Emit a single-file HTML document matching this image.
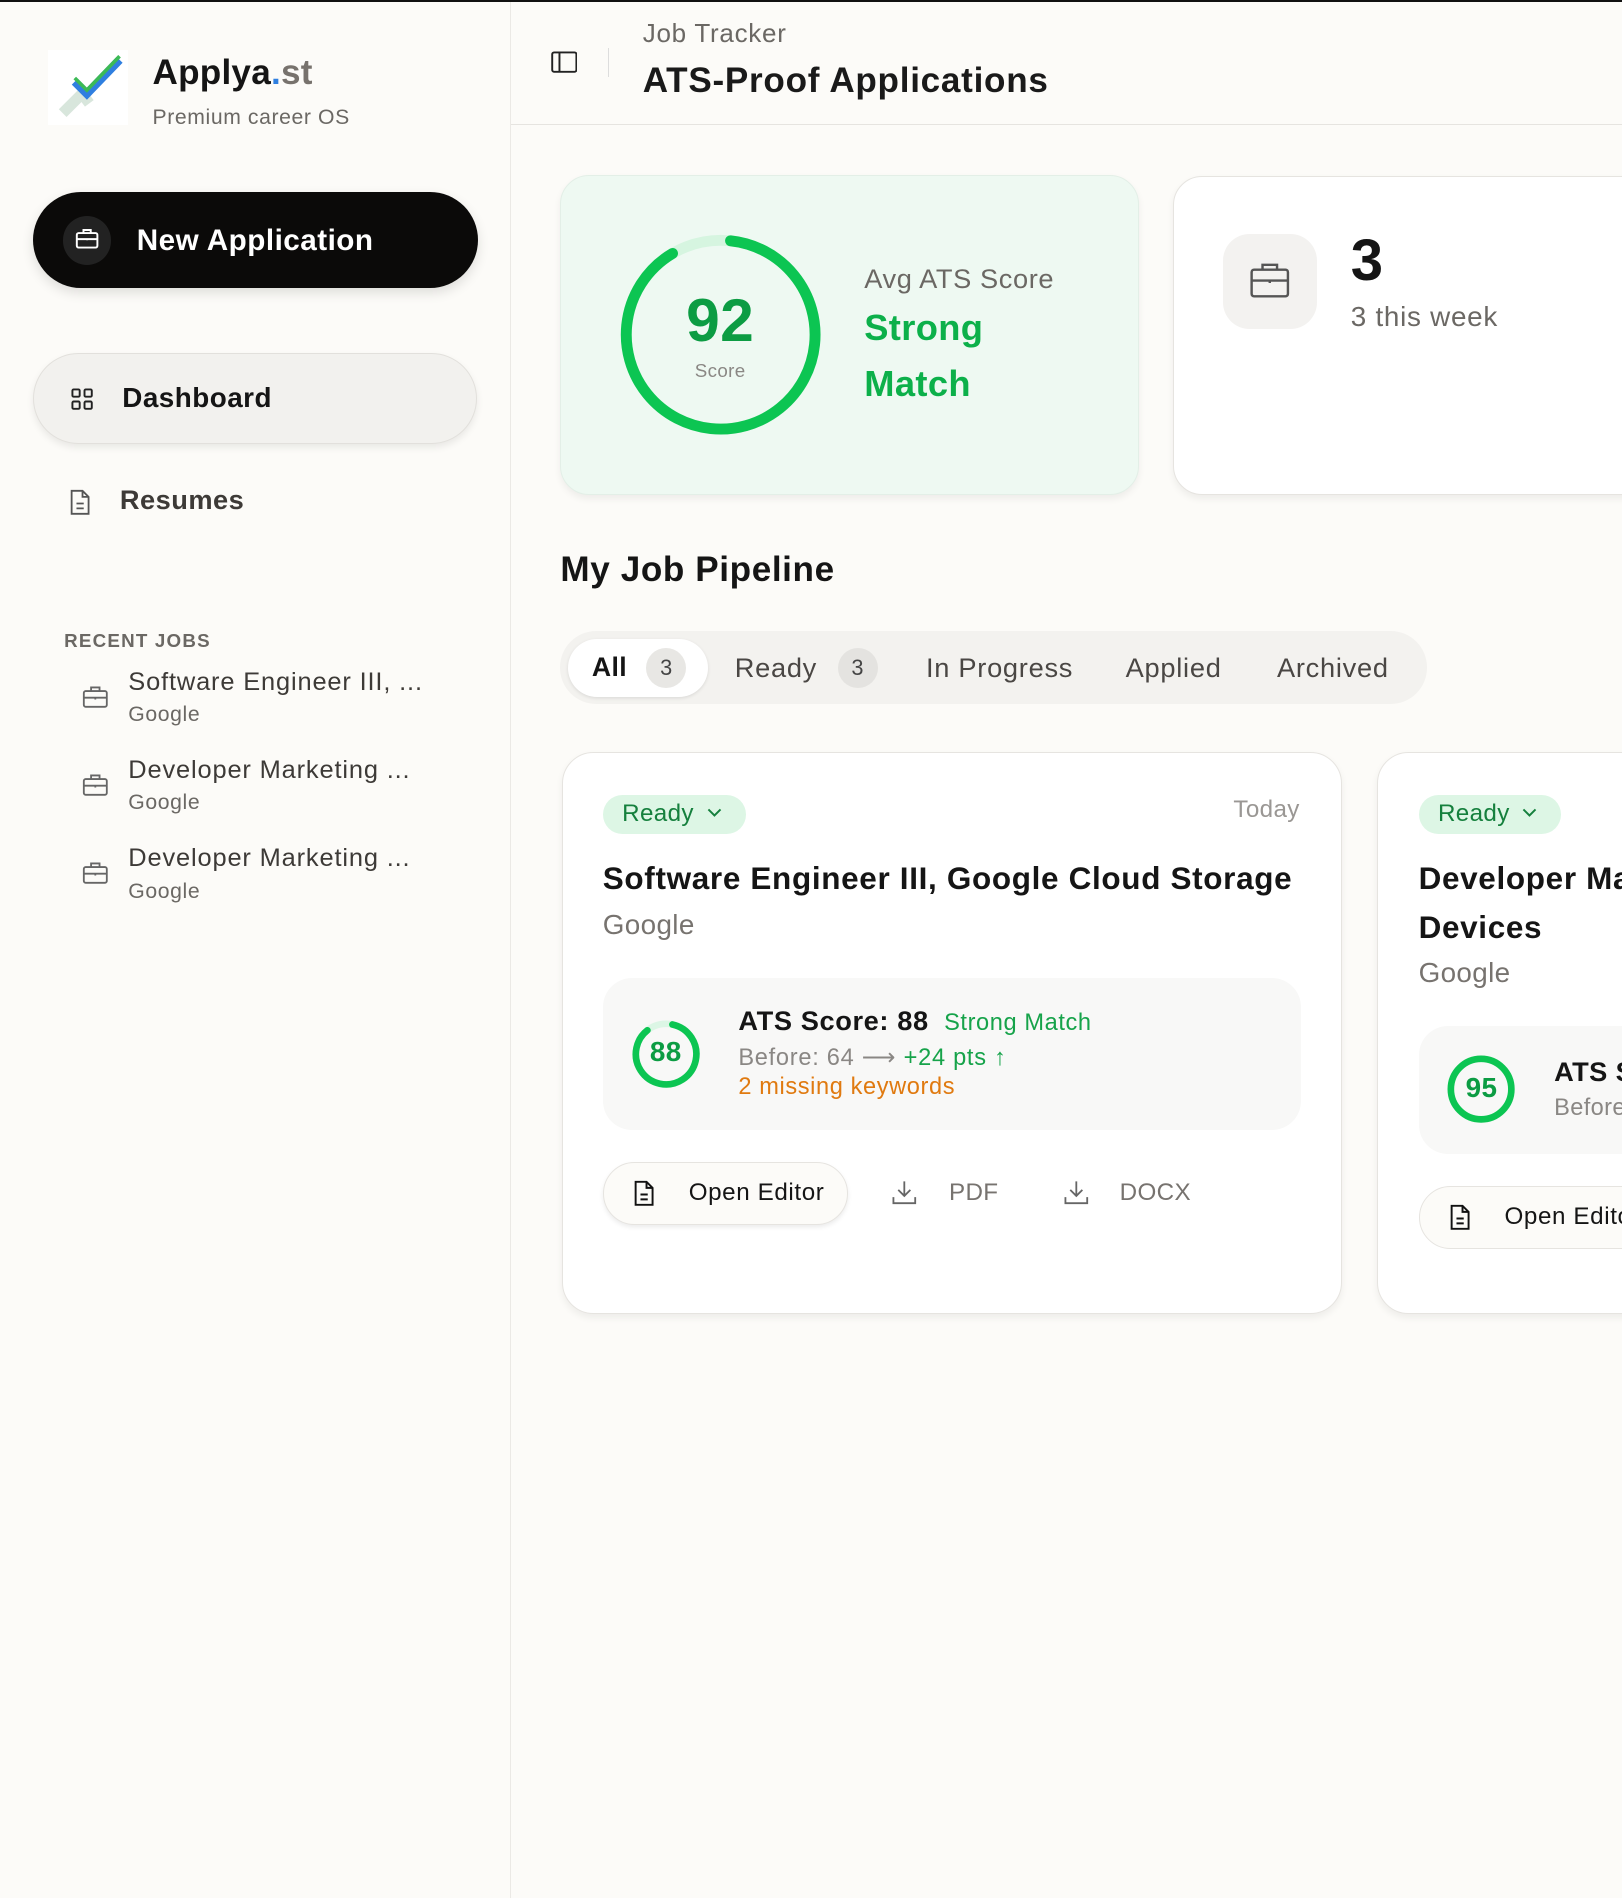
<!DOCTYPE html>
<html><head><style>
*{box-sizing:border-box;margin:0;padding:0}
html,body{width:1622px;height:1898px;overflow:hidden;background:#fcfbf8}
#w{zoom:1.2104;width:1340px;height:1568px;position:relative;font-family:"Liberation Sans",sans-serif;color:#151515;background:#fcfbf8;border-top:2px solid #111;overflow:hidden;letter-spacing:0.3px}
.a{position:absolute;white-space:nowrap}
.g{color:#16a34a}
.gr{color:#6b6864}
svg{display:block}
</style></head><body><div id="w">
<div class="a" style="left:421px;top:0;width:1px;height:1568px;background:#ebe9e5"></div>
<div class="a" style="left:422px;top:101px;width:918px;height:1px;background:#e6e4e0"></div>
<div class="a" style="left:40px;top:40px;width:66px;height:62px;background:#fff"></div>
<svg class="a" style="left:44px;top:44px" width="60" height="56" viewBox="0 0 60 56"><path d="M8 48 L24 32 L30 40" stroke="#d8e6dc" stroke-width="9" fill="none"/><path d="M18 22 L28 32 L55 4" stroke="#2f7fe0" stroke-width="7" fill="none"/><path d="M18 19 L28 29 L55 1" stroke="#3cba55" stroke-width="3" fill="none"/></svg>
<div class="a" style="left:126px;top:42px;font-size:29px;font-weight:bold;letter-spacing:0.2px">Applya<span style="color:#2f7fe0">.</span><span style="color:#77726d">st</span></div>
<div class="a gr" style="left:126px;top:86px;font-size:17.5px;letter-spacing:0.5px">Premium career OS</div>
<div class="a" style="left:27px;top:157px;width:368px;height:79px;background:#0b0a09;border-radius:40px;box-shadow:0 4px 10px rgba(0,0,0,.12)"></div>
<div class="a" style="left:52px;top:177px;width:40px;height:40px;border-radius:50%;background:#222"></div>
<svg class="a" style="left:62px;top:186px" width="20" height="20" viewBox="0 0 20 20" fill="none" stroke="#fff" stroke-width="1.6"><rect x="1.5" y="5" width="17" height="12" rx="1.5"/><path d="M7 5V2.5h6V5M1.5 10h17M10 9.5v1.5"/></svg>
<div class="a" style="left:113px;top:183px;font-size:24.5px;font-weight:bold;color:#fff;letter-spacing:0.4px">New Application</div>
<div class="a" style="left:27px;top:290px;width:367px;height:75px;background:#f2f1ee;border:1px solid #e2e0dc;border-radius:38px;box-shadow:0 3px 6px rgba(0,0,0,.08)"></div>
<svg class="a" style="left:58px;top:318px" width="20" height="20" viewBox="0 0 20 20" fill="none" stroke="#222" stroke-width="1.6"><rect x="2" y="2" width="6" height="6" rx="1"/><rect x="12" y="2" width="6" height="6" rx="1"/><rect x="2" y="12" width="6" height="6" rx="1"/><rect x="12" y="12" width="6" height="6" rx="1"/></svg>
<div class="a" style="left:101px;top:314px;font-size:23px;font-weight:bold;letter-spacing:0.4px">Dashboard</div>
<svg class="a" style="left:56px;top:402px" width="20" height="22" viewBox="0 0 20 22" fill="none" stroke="#555" stroke-width="1.5"><path d="M3 1.5h9l5 5v14H3z M12 1.5v5h5 M7 12h6 M7 16h6"/></svg>
<div class="a" style="left:99px;top:398px;font-size:22.5px;font-weight:bold;color:#3d3a37;letter-spacing:0.4px">Resumes</div>
<div class="a" style="left:53px;top:519px;font-size:15.5px;font-weight:bold;color:#6b6864;letter-spacing:1px">RECENT JOBS</div>
<div class="a" style="left:0;top:548px">
 <svg class="a" style="left:68px;top:16px" width="22" height="20" viewBox="0 0 22 20" fill="none" stroke="#666" stroke-width="1.5"><rect x="1.5" y="5" width="19" height="13" rx="1.5"/><path d="M7.5 5V2h7v3M1.5 10.5h19M11 10v2"/></svg>
 <div class="a" style="left:106px;top:2px;font-size:21px;color:#3d3a37;letter-spacing:0.7px">Software Engineer III, ...</div>
 <div class="a gr" style="left:106px;top:31px;font-size:17.5px;letter-spacing:0.5px">Google</div>
</div>
<div class="a" style="left:0;top:621px">
 <svg class="a" style="left:68px;top:16px" width="22" height="20" viewBox="0 0 22 20" fill="none" stroke="#666" stroke-width="1.5"><rect x="1.5" y="5" width="19" height="13" rx="1.5"/><path d="M7.5 5V2h7v3M1.5 10.5h19M11 10v2"/></svg>
 <div class="a" style="left:106px;top:2px;font-size:21px;color:#3d3a37;letter-spacing:0.7px">Developer Marketing ...</div>
 <div class="a gr" style="left:106px;top:31px;font-size:17.5px;letter-spacing:0.5px">Google</div>
</div>
<div class="a" style="left:0;top:694px">
 <svg class="a" style="left:68px;top:16px" width="22" height="20" viewBox="0 0 22 20" fill="none" stroke="#666" stroke-width="1.5"><rect x="1.5" y="5" width="19" height="13" rx="1.5"/><path d="M7.5 5V2h7v3M1.5 10.5h19M11 10v2"/></svg>
 <div class="a" style="left:106px;top:2px;font-size:21px;color:#3d3a37;letter-spacing:0.7px">Developer Marketing ...</div>
 <div class="a gr" style="left:106px;top:31px;font-size:17.5px;letter-spacing:0.5px">Google</div>
</div>
<svg class="a" style="left:455px;top:40px" width="22" height="20" viewBox="0 0 22 20" fill="none" stroke="#222" stroke-width="1.6"><rect x="1" y="2" width="20" height="16" rx="1.5"/><path d="M7 2v16"/></svg>
<div class="a" style="left:502px;top:38px;width:1px;height:24px;background:#ddd"></div>
<div class="a gr" style="left:531px;top:13px;font-size:21.5px;letter-spacing:0.6px">Job Tracker</div>
<div class="a" style="left:531px;top:49px;font-size:29px;font-weight:bold;color:#1a1a1a;letter-spacing:0.6px">ATS-Proof Applications</div>
<div class="a" style="left:463px;top:143px;width:478px;height:264px;background:#eef9f2;border:1px solid #e3efe7;border-radius:24px;box-shadow:0 3px 6px rgba(0,0,0,.06)"></div>
<svg class="a" style="left:511px;top:191px" width="168" height="168" viewBox="0 0 168 168"><circle cx="84" cy="84" r="78" fill="none" stroke="#d6f5e0" stroke-width="9"/><circle cx="84" cy="84" r="78" fill="none" stroke="#0cc552" stroke-width="9" stroke-linecap="round" stroke-dasharray="440 490" transform="rotate(-84 84 84)"/></svg>
<div class="a" style="left:535px;top:234px;width:120px;text-align:center;font-size:50px;font-weight:bold;color:#0c9c43">92</div>
<div class="a" style="left:535px;top:296px;width:120px;text-align:center;font-size:15.5px;color:#8a8784">Score</div>
<div class="a gr" style="left:714px;top:216px;font-size:22.5px;letter-spacing:0.5px">Avg ATS Score</div>
<div class="a" style="left:714px;top:252px;font-size:30px;font-weight:bold;color:#0cb04a">Strong</div>
<div class="a" style="left:714px;top:298px;font-size:30px;font-weight:bold;color:#0cb04a">Match</div>
<div class="a" style="left:969px;top:144px;width:420px;height:263px;background:#fff;border:1px solid #e6e4e0;border-radius:24px;box-shadow:0 3px 6px rgba(0,0,0,.06)"></div>
<div class="a" style="left:1010px;top:192px;width:78px;height:78px;background:#f3f2f0;border-radius:22px"></div>
<svg class="a" style="left:1031px;top:213px" width="36" height="36" viewBox="0 0 36 36" fill="none" stroke="#555" stroke-width="2"><rect x="3" y="8" width="30" height="22" rx="2"/><path d="M12 8V4h12v4M3 17h30M18 16v3"/></svg>
<div class="a" style="left:1116px;top:186px;font-size:48px;font-weight:bold">3</div>
<div class="a gr" style="left:1116px;top:247px;font-size:23px;letter-spacing:0.6px">3 this week</div>
<div class="a" style="left:463px;top:453px;font-size:29px;font-weight:bold;letter-spacing:0.5px">My Job Pipeline</div>
<div class="a" style="left:463px;top:520px;width:716px;height:60px;background:#f3f2ef;border-radius:30px"></div>
<div class="a" style="left:469px;top:526px;width:116px;height:48px;background:#fff;border-radius:24px;box-shadow:0 1px 3px rgba(0,0,0,.1)"></div>
<div class="a" style="left:489px;top:537px;font-size:22px;font-weight:bold">All</div>
<div class="a" style="left:534px;top:534px;width:33px;height:33px;border-radius:50%;background:#e8e7e4;text-align:center;line-height:33px;font-size:18px;color:#444">3</div>
<div class="a" style="left:607px;top:537px;font-size:22.5px;color:#4a4744;letter-spacing:0.6px">Ready</div>
<div class="a" style="left:692px;top:534px;width:33px;height:33px;border-radius:50%;background:#e4e3e0;text-align:center;line-height:33px;font-size:18px;color:#444">3</div>
<div class="a" style="left:765px;top:537px;font-size:22.5px;color:#4a4744;letter-spacing:0.6px">In Progress</div>
<div class="a" style="left:930px;top:537px;font-size:22.5px;color:#4a4744;letter-spacing:0.6px">Applied</div>
<div class="a" style="left:1055px;top:537px;font-size:22.5px;color:#4a4744;letter-spacing:0.6px">Archived</div>
<div class="a" style="left:464px;top:620px;width:645px;height:464px;background:#fff;border:1.5px solid #e6e4e0;border-radius:26px;box-shadow:0 3px 6px rgba(0,0,0,.06)"></div>
<div class="a" style="left:498px;top:655px;width:118px;height:32px;background:#ddf6e5;border-radius:16px"></div>
<div class="a" style="left:514px;top:659px;font-size:20px;color:#15803d">Ready</div>
<svg class="a" style="left:583px;top:665px" width="14" height="10" viewBox="0 0 14 10" fill="none" stroke="#15803d" stroke-width="1.6"><path d="M2 2l5 5 5-5"/></svg>
<div class="a" style="left:1019px;top:656px;font-size:20px;color:#9a9794">Today</div>
<div class="a" style="left:498px;top:710px;font-size:26px;font-weight:bold;letter-spacing:0.55px">Software Engineer III, Google Cloud Storage</div>
<div class="a gr" style="left:498px;top:749px;font-size:23px;color:#77736f">Google</div>
<div class="a" style="left:498px;top:806px;width:577px;height:126px;background:#f8f8f7;border-radius:24px"></div>
<svg class="a" style="left:521px;top:840px" width="58" height="58" viewBox="0 0 58 58"><circle cx="29" cy="29" r="25" fill="none" stroke="#dcf6e5" stroke-width="5.5"/><circle cx="29" cy="29" r="25" fill="none" stroke="#0cc552" stroke-width="5.5" stroke-linecap="round" stroke-dasharray="135 157" transform="rotate(-78 29 29)"/></svg>
<div class="a" style="left:521px;top:854px;width:58px;text-align:center;font-size:23px;font-weight:bold;color:#0c9c43">88</div>
<div class="a" style="left:610px;top:829px;font-size:22.5px;font-weight:bold;letter-spacing:0.5px">ATS Score: 88 <span style="font-size:19.5px;font-weight:normal;color:#16a34a">&nbsp;Strong Match</span></div>
<div class="a" style="left:610px;top:860px;font-size:19.5px;color:#8a8784;letter-spacing:0.6px">Before: 64 ⟶ <span class="g">+24 pts ↑</span></div>
<div class="a" style="left:610px;top:886px;font-size:19.5px;color:#e07a10;letter-spacing:0.5px">2 missing keywords</div>
<div class="a" style="left:498px;top:958px;width:203px;height:52px;background:#fcfbf8;border:1.5px solid #e6e4e0;border-radius:26px;box-shadow:0 2px 4px rgba(0,0,0,.08)"></div>
<svg class="a" style="left:522px;top:973px" width="20" height="22" viewBox="0 0 20 22" fill="none" stroke="#111" stroke-width="1.6"><path d="M3 1.5h9l5 5v14H3z M12 1.5v5h5 M7 12h6 M7 16h6"/></svg>
<div class="a" style="left:569px;top:972px;font-size:20px;letter-spacing:0.5px">Open Editor</div>
<svg class="a" style="left:736px;top:972px" width="22" height="22" viewBox="0 0 22 22" fill="none" stroke="#666" stroke-width="1.5"><path d="M11 2v12M6 9l5 5 5-5M2 15v5h18v-5"/></svg>
<div class="a" style="left:784px;top:972px;font-size:20px;color:#77736f">PDF</div>
<svg class="a" style="left:878px;top:972px" width="22" height="22" viewBox="0 0 22 22" fill="none" stroke="#666" stroke-width="1.5"><path d="M11 2v12M6 9l5 5 5-5M2 15v5h18v-5"/></svg>
<div class="a" style="left:925px;top:972px;font-size:20px;color:#77736f">DOCX</div>
<div class="a" style="left:1138px;top:620px;width:400px;height:464px;background:#fff;border:1.5px solid #e6e4e0;border-radius:26px;box-shadow:0 3px 6px rgba(0,0,0,.06)"></div>
<div class="a" style="left:1172px;top:655px;width:118px;height:32px;background:#ddf6e5;border-radius:16px"></div>
<div class="a" style="left:1188px;top:659px;font-size:20px;color:#15803d">Ready</div>
<svg class="a" style="left:1257px;top:665px" width="14" height="10" viewBox="0 0 14 10" fill="none" stroke="#15803d" stroke-width="1.6"><path d="M2 2l5 5 5-5"/></svg>
<div class="a" style="left:1172px;top:710px;font-size:26px;font-weight:bold;letter-spacing:0.55px">Developer Marketing</div>
<div class="a" style="left:1172px;top:750px;font-size:26px;font-weight:bold;letter-spacing:0.55px">Devices</div>
<div class="a" style="left:1172px;top:789px;font-size:23px;color:#77736f">Google</div>
<div class="a" style="left:1172px;top:846px;width:300px;height:106px;background:#f8f8f7;border-radius:24px"></div>
<svg class="a" style="left:1195px;top:869px" width="58" height="58" viewBox="0 0 58 58"><circle cx="29" cy="29" r="25" fill="none" stroke="#0cc552" stroke-width="5.5"/></svg>
<div class="a" style="left:1195px;top:884px;width:58px;text-align:center;font-size:23px;font-weight:bold;color:#0c9c43">95</div>
<div class="a" style="left:1284px;top:871px;font-size:22.5px;font-weight:bold">ATS Score</div>
<div class="a" style="left:1284px;top:903px;font-size:19.5px;color:#8a8784">Before</div>
<div class="a" style="left:1172px;top:978px;width:203px;height:52px;background:#fcfbf8;border:1.5px solid #e6e4e0;border-radius:26px"></div>
<svg class="a" style="left:1196px;top:993px" width="20" height="22" viewBox="0 0 20 22" fill="none" stroke="#111" stroke-width="1.6"><path d="M3 1.5h9l5 5v14H3z M12 1.5v5h5 M7 12h6 M7 16h6"/></svg>
<div class="a" style="left:1243px;top:992px;font-size:20px;letter-spacing:0.5px">Open Editor</div>
</div></body></html>
